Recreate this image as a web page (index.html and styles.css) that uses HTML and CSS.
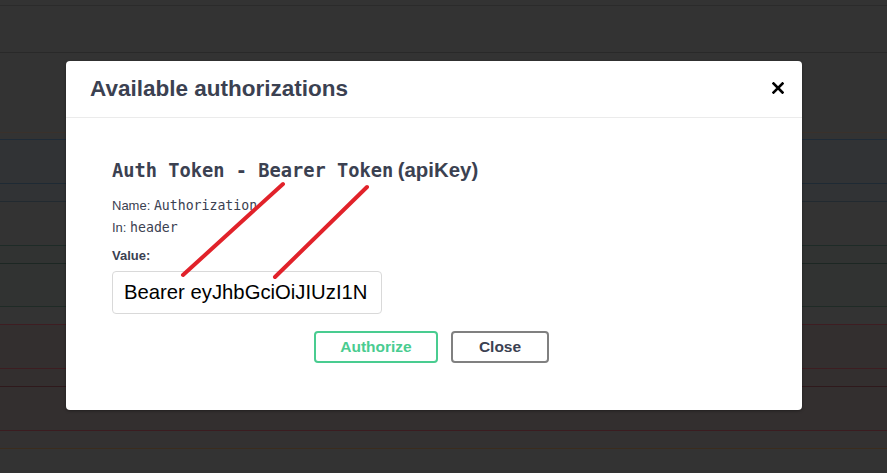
FILE: index.html
```html
<!DOCTYPE html>
<html>
<head>
<meta charset="utf-8">
<link rel="stylesheet" href="styles.css">
</head>
<body>
<div class="page">
  <div class="row r1"></div>
  <div class="row r2"></div>
  <div class="row r3"></div>
  <div class="row r4"></div>
  <div class="row r5 blue"></div>
  <div class="row r6 blue"></div>
  <div class="row r7"></div>
  <div class="row r8 green"></div>
  <div class="row r9 green"></div>
  <div class="row r10"></div>
  <div class="row r11 red"></div>
  <div class="row r12 red"></div>
  <div class="row r13 red"></div>
  <div class="row r14"></div>
  <div class="row r15"></div>
</div>

<div class="modal">
  <div class="modal-header">
    <h3 class="modal-title">Available authorizations</h3>
    <button class="close-btn" aria-label="Close">
      <svg width="12" height="12" viewBox="0 0 12 12"><path d="M1.5 1.5 L10.5 10.5 M10.5 1.5 L1.5 10.5" stroke="#000" stroke-width="2.6" stroke-linecap="square" fill="none"/></svg>
    </button>
  </div>
  <div class="modal-body">
    <h4 class="scheme-title"><code>Auth Token - Bearer Token</code> <span class="scheme-type">(apiKey)</span></h4>
    <p class="meta">Name: <code>Authorization</code></p>
    <p class="meta">In: <code>header</code></p>
    <label class="value-label">Value:</label>
    <input class="value-input" type="text" value="Bearer eyJhbGciOiJIUzI1N">
    <div class="btn-wrapper">
      <button class="btn authorize">Authorize</button>
      <button class="btn close">Close</button>
    </div>
  </div>
</div>

<svg class="annot" width="887" height="473" viewBox="0 0 887 473">
  <line x1="183" y1="275" x2="283" y2="184" stroke="#e1222a" stroke-width="4" stroke-linecap="round"/>
  <line x1="275" y1="277" x2="367" y2="187" stroke="#e1222a" stroke-width="4" stroke-linecap="round"/>
</svg>
</body>
</html>
```
FILE: styles.css
```css
html, body {
  margin: 0;
  padding: 0;
  width: 887px;
  height: 473px;
  overflow: hidden;
  background: #333333;
  font-family: "Liberation Sans", Arial, sans-serif;
}

.page {
  display: flex;
  flex-direction: column;
}

.row {
  border-bottom: 1px solid #2a2a2a;
  flex: none;
}
.r1 { height: 5px; border-color: #2b2b2b; }
.r2 { height: 46px; border-color: #292929; }
.r3 { height: 79px; border-color: #3a312b; }
.r4 { height: 6px; border-color: #1f2b37; }
.r5 { height: 43px; border-color: #1e2a34; }
.r6 { height: 17px; border-color: #222a30; }
.r7 { height: 43px; border-color: #1e2b27; }
.r8 { height: 17px; border-color: #1c2723; }
.r9 { height: 42px; border-color: #1f2b26; }
.r10 { height: 17px; border-color: #3e1d22; }
.r11 { height: 43px; border-color: #3d1d21; }
.r12 { height: 17px; border-color: #2f191c; }
.r13 { height: 43px; border-color: #3b1c20; }
.r14 { height: 17px; border-color: #3b2c1d; }
.r15 { height: 30px; border: none; }

.blue { background: #313335; }
.green { background: #313332; }
.red { background: #332f2f; }
.r14 { background: #333131; }

.modal {
  position: absolute;
  left: 66px;
  top: 61px;
  width: 736px;
  height: 349px;
  background: #fff;
  border-radius: 4px;
  box-shadow: 0 1px 3px rgba(0, 0, 0, 0.35);
  box-sizing: border-box;
}

.modal-header {
  height: 57px;
  box-sizing: border-box;
  border-bottom: 1px solid #ebebeb;
  display: flex;
  align-items: center;
  justify-content: space-between;
  padding: 0 18px 0 24px;
}

.modal-title {
  margin: 0;
  font-size: 22.5px;
  font-weight: bold;
  color: #3b4151;
  line-height: 1;
}

.close-btn {
  border: none;
  background: none;
  padding: 0;
  width: 12px;
  height: 12px;
  display: flex;
  margin-bottom: 2px;
}

.modal-body {
  padding: 40px 46px 0 46px;
}

.scheme-title {
  margin: 0 0 13px 0;
  height: 24px;
  line-height: 24px;
  color: #3b4151;
  font-weight: bold;
  white-space: nowrap;
}

.scheme-title code {
  font-family: "DejaVu Sans Mono", monospace;
  font-size: 18.7px;
  font-weight: bold;
  line-height: 24px;
}

.scheme-type {
  font-family: "Liberation Sans", Arial, sans-serif;
  font-size: 20.4px;
  line-height: 24px;
}

.meta {
  margin: 0;
  height: 22px;
  line-height: 22px;
  font-size: 13px;
  color: #3b4151;
}

.meta code {
  font-family: "DejaVu Sans Mono", monospace;
  font-size: 13.2px;
  line-height: 22px;
  color: #3b4151;
}

.value-label {
  display: block;
  margin-top: 8px;
  height: 18px;
  line-height: 18px;
  font-size: 13px;
  font-weight: bold;
  color: #3b4151;
}

.value-input {
  display: block;
  margin-top: 6px;
  width: 270px;
  height: 43px;
  box-sizing: border-box;
  border: 1px solid #d9d9d9;
  border-radius: 4px;
  padding: 0 11px;
  font-family: "Liberation Sans", Arial, sans-serif;
  font-size: 20.3px;
  color: #000;
  background: #fff;
  outline: none;
}

.btn-wrapper {
  display: flex;
  justify-content: center;
  gap: 13px;
  margin-top: 17px;
  padding-right: 5px;
}

.btn {
  height: 32px;
  box-sizing: border-box;
  border-radius: 4px;
  background: #fff;
  font-family: "Liberation Sans", Arial, sans-serif;
  font-size: 15.5px;
  font-weight: bold;
  cursor: pointer;
}

.authorize {
  width: 124px;
  border: 2px solid #49cc90;
  color: #49cc90;
}

.close {
  width: 98px;
  border: 2px solid #808080;
  color: #3b4151;
}

.annot {
  position: absolute;
  left: 0;
  top: 0;
  pointer-events: none;
}
```
